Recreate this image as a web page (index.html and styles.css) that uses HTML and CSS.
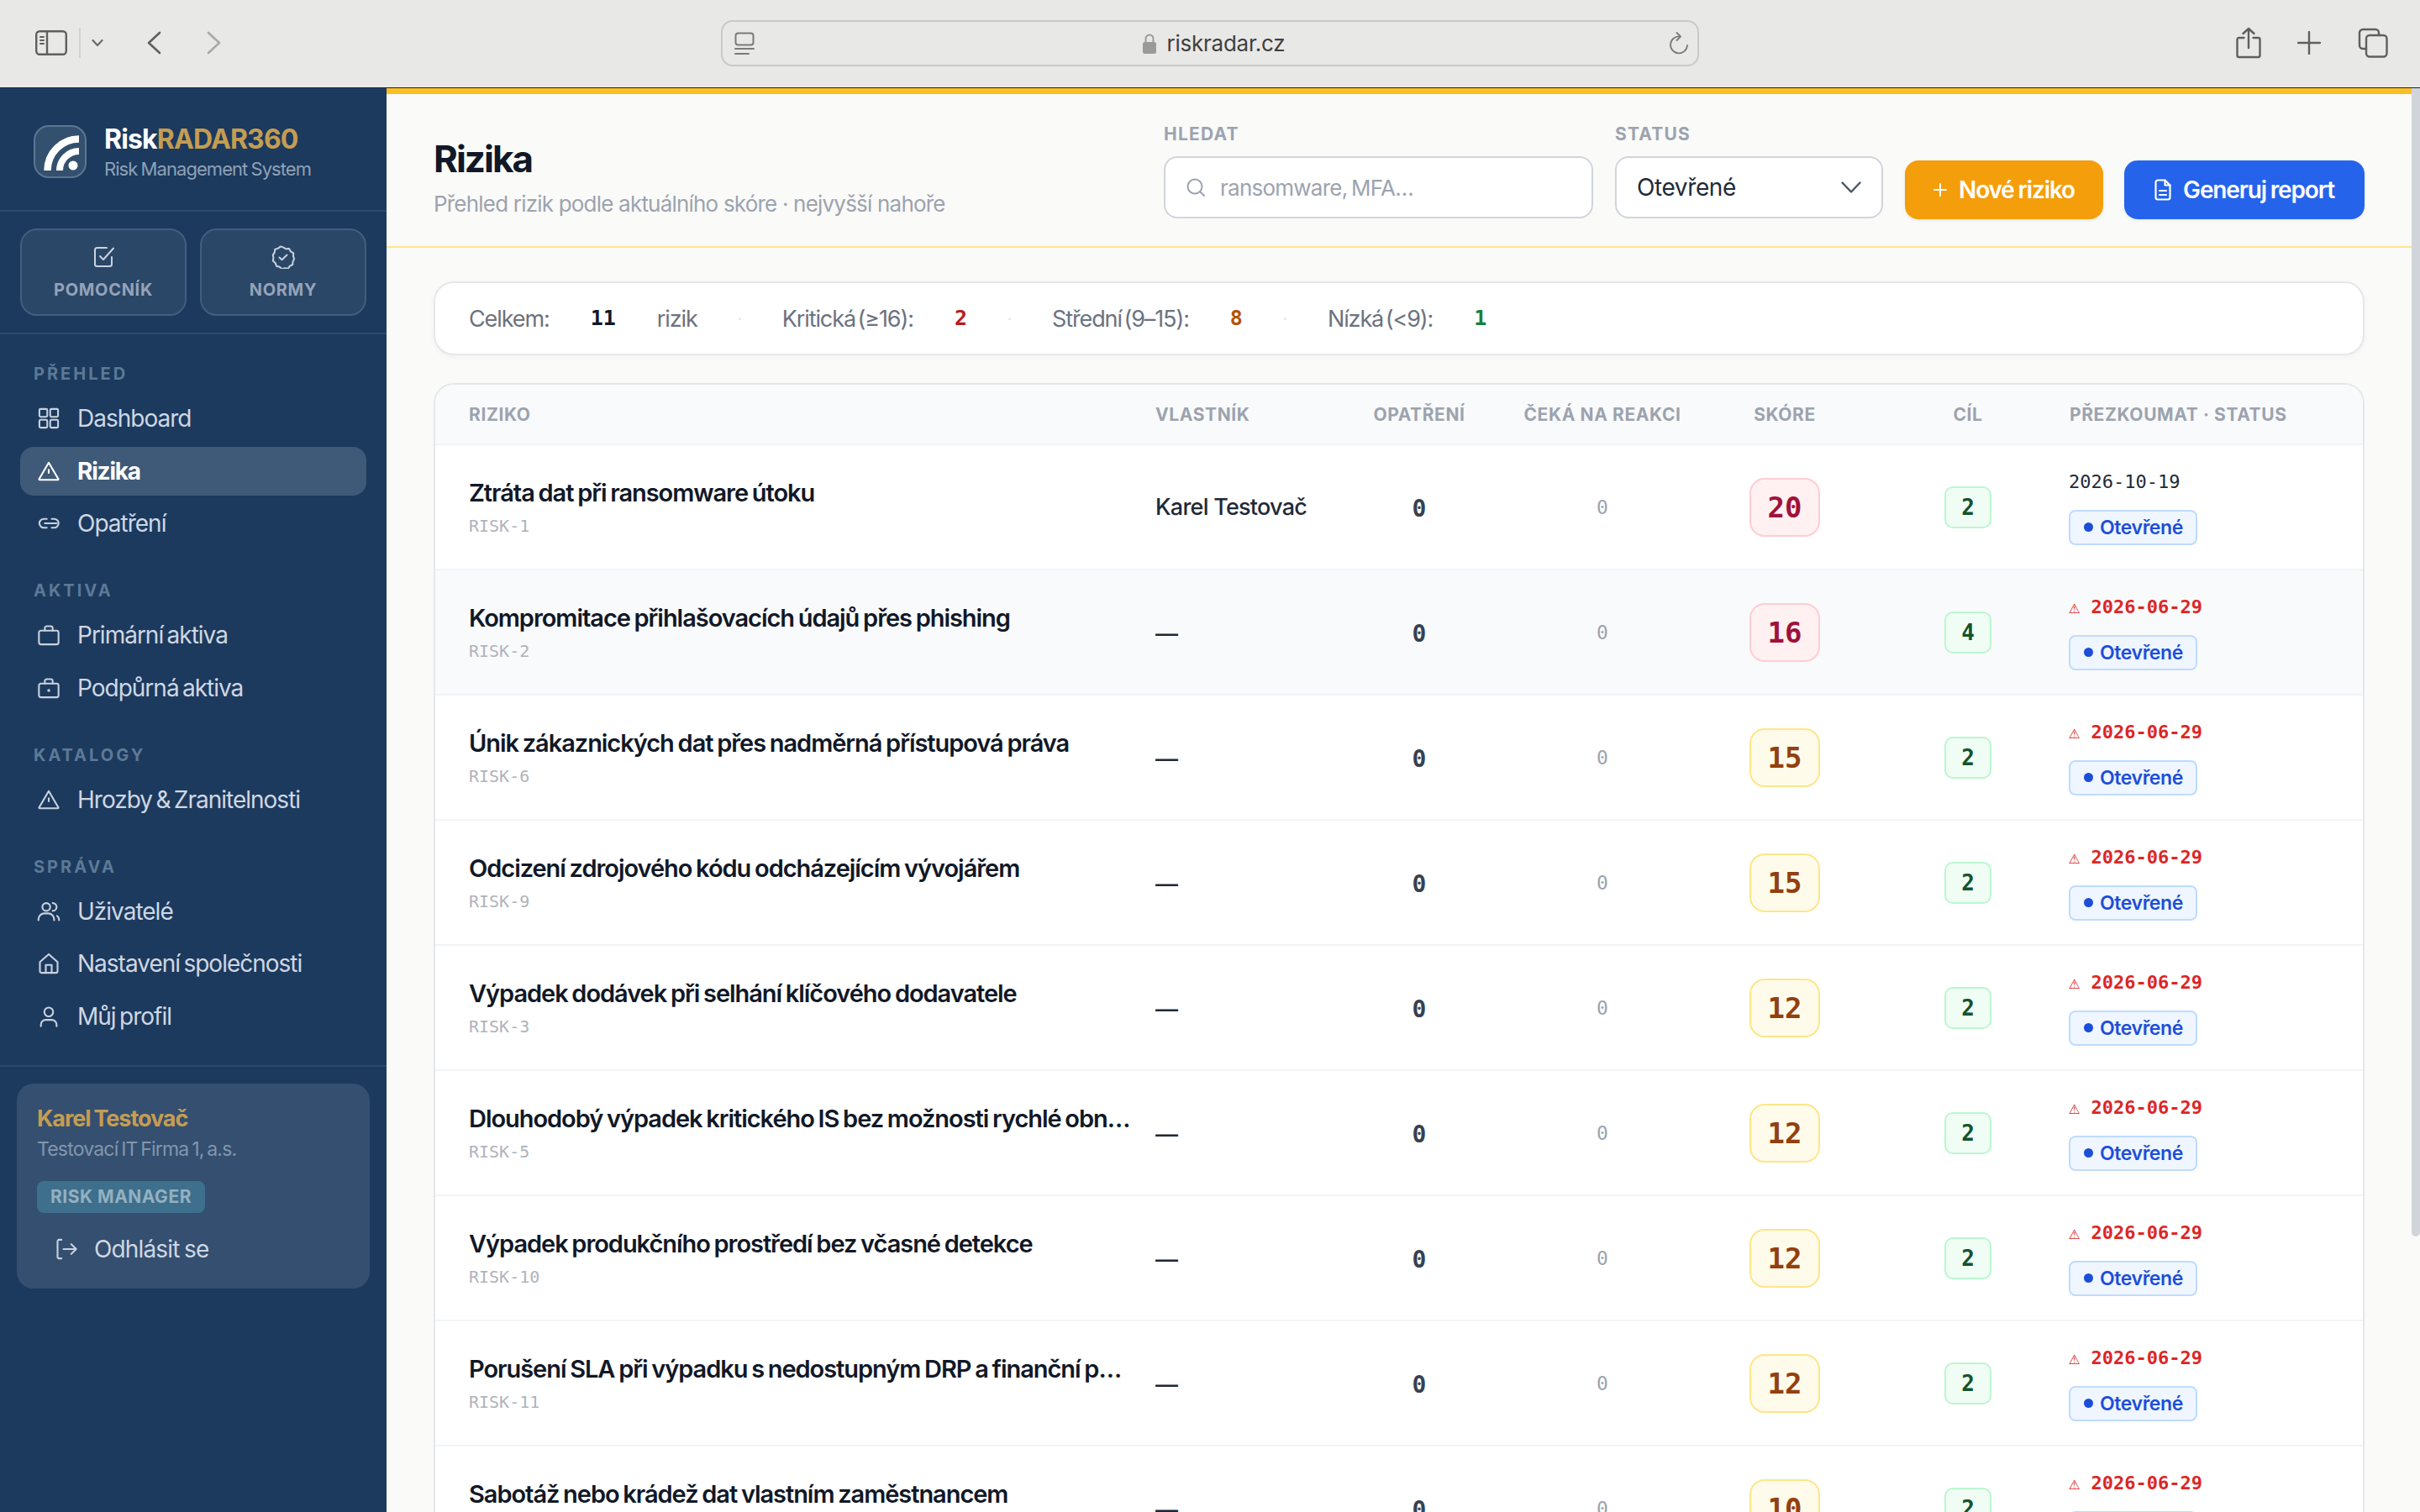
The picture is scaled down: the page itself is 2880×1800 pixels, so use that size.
FILE: index.html
```html
<!DOCTYPE html>
<html lang="cs">
<head>
<meta charset="utf-8">
<title>Rizika – RiskRADAR360</title>
<link rel="stylesheet" href="styles.css">
</head>
<body>
<svg class="defs" width="0" height="0" aria-hidden="true">
  <symbol id="i-warn" viewBox="0 0 24 24"><path d="M12 3.2 2.2 20a.6.6 0 0 0 .5.8h18.6a.6.6 0 0 0 .5-.8L12 3.2Z"/><path d="M12 10.5v3.2"/></symbol>
  <symbol id="i-grid" viewBox="0 0 24 24"><rect x="2.5" y="2.5" width="8" height="8" rx="1.2"/><rect x="13.5" y="2.5" width="8" height="8" rx="1.2"/><rect x="2.5" y="13.5" width="8" height="8" rx="1.2"/><rect x="13.5" y="13.5" width="8" height="8" rx="1.2"/></symbol>
  <symbol id="i-link" viewBox="0 0 24 24"><path d="M8 12h12"/><path d="M10 7.500H7a4.500 4.500 0 0 0 0 9h3"/><path d="M15 7.500h2.500a4.500 4.500 0 0 1 0 9H15"/></symbol>
  <symbol id="i-case" viewBox="0 0 24 24"><rect x="2" y="7.500" width="20" height="14" rx="2"/><path d="M8 7.500V5a2 2 0 0 1 2-2h4a2 2 0 0 1 2 2v2.500"/></symbol>
  <symbol id="i-aid" viewBox="0 0 24 24"><rect x="2" y="7.500" width="20" height="14" rx="2"/><path d="M8 7.500V5a2 2 0 0 1 2-2h4a2 2 0 0 1 2 2v2.500"/><path d="M12 14.500h.01" stroke-width="3"/></symbol>
  <symbol id="i-users" viewBox="0 0 24 24"><circle cx="9.500" cy="7.500" r="4"/><path d="M1.500 21v-1a6 6 0 0 1 6-6h4a6 6 0 0 1 6 6v1"/><path d="M16 3.500a4 4 0 0 1 0 8"/><path d="M20.500 16.500a5 5 0 0 1 2 4v.5"/></symbol>
  <symbol id="i-home" viewBox="0 0 24 24"><path d="M3 10.500 12 2.500l9 8V20a1.500 1.500 0 0 1-1.500 1.500h-15A1.500 1.500 0 0 1 3 20v-9.500Z"/><path d="M9 21.500v-8h6v8"/></symbol>
  <symbol id="i-user" viewBox="0 0 24 24"><circle cx="12" cy="7.500" r="4.500"/><path d="M4 22v-1.500a5 5 0 0 1 5-5h6a5 5 0 0 1 5 5V22"/></symbol>
</svg>

<header class="chrome">
  <div class="chrome-left">
    <svg class="ci ci-side" viewBox="0 0 38 30"><rect x="1.200" y="1.200" width="35.600" height="27.600" rx="4"/><path d="M14 1.500v27"/><path d="M6 8h4M6 12h4M6 16h4" stroke-width="2"/></svg>
    <span class="chrome-sep"></span>
    <svg class="ci ci-mini" viewBox="0 0 14 10"><path d="M1.500 2 7 8l5.500-6"/></svg>
    <svg class="ci ci-back" viewBox="0 0 18 28"><path d="M16 2 3 14l13 12"/></svg>
    <svg class="ci ci-fwd" viewBox="0 0 18 28"><path d="M2 2l13 12L2 26"/></svg>
  </div>
  <div class="urlbar">
    <svg class="ci ci-tab" viewBox="0 0 24 28"><rect x="1.500" y="1.500" width="21" height="14" rx="3"/><path d="M1 20h22M1 26h16"/></svg>
    <div class="url-mid">
      <svg class="ci-lock" viewBox="0 0 18 26"><path d="M4.500 12V7a4.500 4.500 0 0 1 9 0v5" fill="none" stroke="#9a9a9a" stroke-width="2"/><rect x="1" y="11" width="16" height="14" rx="2.500" fill="#9a9a9a"/></svg>
      <span class="url-text">riskradar.cz</span>
    </div>
    <svg class="ci ci-reload" viewBox="0 0 24 28"><path d="M13 5.500A10 10 0 1 0 22 16"/><path d="M9.500 1 14 5.500 9.500 10"/></svg>
  </div>
  <div class="chrome-right">
    <svg class="ci ci-share" viewBox="0 0 30 38"><path d="M9.500 13H3.500a2 2 0 0 0-2 2v19a2 2 0 0 0 2 2h23a2 2 0 0 0 2-2V15a2 2 0 0 0-2-2h-6"/><path d="M15 25V2M8.500 8 15 2l6.500 6"/></svg>
    <svg class="ci ci-plus" viewBox="0 0 28 28"><path d="M14 1v26M1 14h26"/></svg>
    <svg class="ci ci-tabs" viewBox="0 0 36 36"><rect x="10" y="9" width="24.500" height="25.500" rx="4"/><path d="M10 25H6a4 4 0 0 1-4-4V6a4 4 0 0 1 4-4h15a4 4 0 0 1 4 4v3"/></svg>
  </div>
</header>

<div class="app">
  <aside class="sidebar">
    <div class="brand">
      <div class="logo">
        <svg viewBox="0 0 63 63"><path class="logo-arc" d="M16.500 54A37.500 37.500 0 0 1 54 16.500" stroke-width="8.500"/><path class="logo-arc" d="M31 54A23 23 0 0 1 54 31" stroke-width="8"/><circle cx="47" cy="48" r="5.500" fill="#fff"/></svg>
      </div>
      <div class="brand-text">
        <div class="brand-name">Risk<span class="brand-gold">RADAR360</span></div>
        <div class="brand-sub">Risk Management System</div>
      </div>
    </div>
    <div class="quick">
      <a class="quick-btn">
        <svg class="qi" viewBox="0 0 28 28"><path d="M24 14v8.500a2.500 2.500 0 0 1-2.500 2.500h-15A2.500 2.500 0 0 1 4 22.500v-17A2.500 2.500 0 0 1 6.500 3H18"/><path d="M10 13l4 4L26 3.500"/></svg>
        <span>POMOCNÍK</span>
      </a>
      <a class="quick-btn">
        <svg class="qi" viewBox="0 0 28 28"><path d="M14 1.800l3.300 1.900 3.800-.2 1.900 3.300 3.200 2-.2 3.700 1.200 3-1.700 3.300-.2 3.600-3.300 1.700-2.200 3-3.800-.4-3.500.9-2.800-2.400-3.600-1-1.300-3.500L1.800 18l.6-3.800L1.800 11l2-3.200.6-3.700 3.600-1.100L11 .8z" transform="translate(0 .6)"/><path d="M9.500 14.500l3 2.800 6-5.800"/></svg>
        <span>NORMY</span>
      </a>
    </div>
    <nav class="nav">
      <div class="nav-label">PŘEHLED</div>
      <ul class="nav-list">
        <li class="nav-item"><svg class="ni"><use href="#i-grid"/></svg>Dashboard</li>
        <li class="nav-item active"><svg class="ni"><use href="#i-warn"/></svg>Rizika</li>
        <li class="nav-item"><svg class="ni"><use href="#i-link"/></svg>Opatření</li>
      </ul>
      <div class="nav-label">AKTIVA</div>
      <ul class="nav-list">
        <li class="nav-item"><svg class="ni"><use href="#i-case"/></svg>Primární aktiva</li>
        <li class="nav-item"><svg class="ni"><use href="#i-aid"/></svg>Podpůrná aktiva</li>
      </ul>
      <div class="nav-label">KATALOGY</div>
      <ul class="nav-list">
        <li class="nav-item"><svg class="ni"><use href="#i-warn"/></svg>Hrozby &amp; Zranitelnosti</li>
      </ul>
      <div class="nav-label">SPRÁVA</div>
      <ul class="nav-list">
        <li class="nav-item"><svg class="ni"><use href="#i-users"/></svg>Uživatelé</li>
        <li class="nav-item"><svg class="ni"><use href="#i-home"/></svg>Nastavení společnosti</li>
        <li class="nav-item"><svg class="ni"><use href="#i-user"/></svg>Můj profil</li>
      </ul>
    </nav>
    <div class="side-foot">
      <div class="user-card">
        <div class="user-name">Karel Testovač</div>
        <div class="user-org">Testovací IT Firma 1, a.s.</div>
        <div class="user-role">RISK MANAGER</div>
        <div class="logout">
          <svg class="ni" viewBox="0 0 24 24"><path d="M7 2.500H4.500A1.500 1.500 0 0 0 3 4v16a1.500 1.500 0 0 0 1.500 1.500H7"/><path d="M9 12h13M17 7l5 5-5 5"/></svg>
          <span>Odhlásit se</span>
        </div>
      </div>
    </div>
  </aside>

  <main class="main">
    <div class="page-head">
      <div class="page-title">
        <h1>Rizika</h1>
        <p>Přehled rizik podle aktuálního skóre · nejvyšší nahoře</p>
      </div>
      <div class="field field-search">
        <label>HLEDAT</label>
        <div class="input">
          <svg class="search-ic" viewBox="0 0 24 24"><circle cx="11" cy="11" r="8.500"/><path d="M17.500 17.500 22 22"/></svg>
          <span class="placeholder">ransomware, MFA…</span>
        </div>
      </div>
      <div class="field field-status">
        <label>STATUS</label>
        <div class="input select">
          <span>Otevřené</span>
          <svg class="select-ic" viewBox="0 0 24 14"><path d="M1.500 1.500 12 12.500 22.500 1.500"/></svg>
        </div>
      </div>
      <a class="btn btn-amber">
        <svg class="btn-ic-plus" viewBox="0 0 16 16"><path d="M8 1v14M1 8h14"/></svg>
        Nové riziko
      </a>
      <a class="btn btn-blue">
        <svg class="btn-ic-doc" viewBox="0 0 20 26"><path d="M12.500 1.500H4A2.500 2.500 0 0 0 1.500 4v18A2.500 2.500 0 0 0 4 24.500h12a2.500 2.500 0 0 0 2.500-2.500V7.500l-6-6Z"/><path d="M12.500 1.500v6h6M6 14h8M6 19h8"/></svg>
        Generuj report
      </a>
    </div>

    <div class="content">
      <div class="summary">
        <span>Celkem:</span><b class="n-dark">11</b><span>rizik</span><i class="dot"></i>
        <span>Kritická (≥16):</span><b class="n-red">2</b><i class="dot"></i>
        <span>Střední (9–15):</span><b class="n-orange">8</b><i class="dot"></i>
        <span>Nízká (&lt;9):</span><b class="n-green">1</b>
      </div>

      <div class="table-wrap">
        <table class="risks">
          <colgroup>
            <col class="c-risk"><col class="c-owner"><col class="c-act"><col class="c-wait"><col class="c-score"><col class="c-goal"><col class="c-review">
          </colgroup>
          <thead>
            <tr><th class="left first">RIZIKO</th><th class="left">VLASTNÍK</th><th>OPATŘENÍ</th><th>ČEKÁ NA REAKCI</th><th>SKÓRE</th><th>CÍL</th><th class="left">PŘEZKOUMAT · STATUS</th></tr>
          </thead>
          <tbody>
            <tr>
              <td class="first"><div class="r-title">Ztráta dat při ransomware útoku</div><div class="r-id">RISK-1</div></td>
              <td class="owner">Karel Testovač</td><td><span class="zero">0</span></td><td><span class="wait">0</span></td>
              <td><span class="score s-red">20</span></td><td><span class="goal">2</span></td>
              <td class="review"><div class="date">2026-10-19</div><span class="pill"><i></i>Otevřené</span></td>
            </tr>
            <tr class="hover">
              <td class="first"><div class="r-title">Kompromitace přihlašovacích údajů přes phishing</div><div class="r-id">RISK-2</div></td>
              <td class="owner none">—</td><td><span class="zero">0</span></td><td><span class="wait">0</span></td>
              <td><span class="score s-red">16</span></td><td><span class="goal">4</span></td>
              <td class="review"><div class="date late">⚠ 2026-06-29</div><span class="pill"><i></i>Otevřené</span></td>
            </tr>
            <tr>
              <td class="first"><div class="r-title">Únik zákaznických dat přes nadměrná přístupová práva</div><div class="r-id">RISK-6</div></td>
              <td class="owner none">—</td><td><span class="zero">0</span></td><td><span class="wait">0</span></td>
              <td><span class="score s-amber">15</span></td><td><span class="goal">2</span></td>
              <td class="review"><div class="date late">⚠ 2026-06-29</div><span class="pill"><i></i>Otevřené</span></td>
            </tr>
            <tr>
              <td class="first"><div class="r-title">Odcizení zdrojového kódu odcházejícím vývojářem</div><div class="r-id">RISK-9</div></td>
              <td class="owner none">—</td><td><span class="zero">0</span></td><td><span class="wait">0</span></td>
              <td><span class="score s-amber">15</span></td><td><span class="goal">2</span></td>
              <td class="review"><div class="date late">⚠ 2026-06-29</div><span class="pill"><i></i>Otevřené</span></td>
            </tr>
            <tr>
              <td class="first"><div class="r-title">Výpadek dodávek při selhání klíčového dodavatele</div><div class="r-id">RISK-3</div></td>
              <td class="owner none">—</td><td><span class="zero">0</span></td><td><span class="wait">0</span></td>
              <td><span class="score s-amber">12</span></td><td><span class="goal">2</span></td>
              <td class="review"><div class="date late">⚠ 2026-06-29</div><span class="pill"><i></i>Otevřené</span></td>
            </tr>
            <tr>
              <td class="first"><div class="r-title">Dlouhodobý výpadek kritického IS bez možnosti rychlé obnovy</div><div class="r-id">RISK-5</div></td>
              <td class="owner none">—</td><td><span class="zero">0</span></td><td><span class="wait">0</span></td>
              <td><span class="score s-amber">12</span></td><td><span class="goal">2</span></td>
              <td class="review"><div class="date late">⚠ 2026-06-29</div><span class="pill"><i></i>Otevřené</span></td>
            </tr>
            <tr>
              <td class="first"><div class="r-title">Výpadek produkčního prostředí bez včasné detekce</div><div class="r-id">RISK-10</div></td>
              <td class="owner none">—</td><td><span class="zero">0</span></td><td><span class="wait">0</span></td>
              <td><span class="score s-amber">12</span></td><td><span class="goal">2</span></td>
              <td class="review"><div class="date late">⚠ 2026-06-29</div><span class="pill"><i></i>Otevřené</span></td>
            </tr>
            <tr>
              <td class="first"><div class="r-title">Porušení SLA při výpadku s nedostupným DRP a finanční penalizací</div><div class="r-id">RISK-11</div></td>
              <td class="owner none">—</td><td><span class="zero">0</span></td><td><span class="wait">0</span></td>
              <td><span class="score s-amber">12</span></td><td><span class="goal">2</span></td>
              <td class="review"><div class="date late">⚠ 2026-06-29</div><span class="pill"><i></i>Otevřené</span></td>
            </tr>
            <tr>
              <td class="first"><div class="r-title">Sabotáž nebo krádež dat vlastním zaměstnancem</div><div class="r-id">RISK-7</div></td>
              <td class="owner none">—</td><td><span class="zero">0</span></td><td><span class="wait">0</span></td>
              <td><span class="score s-amber">10</span></td><td><span class="goal">2</span></td>
              <td class="review"><div class="date late">⚠ 2026-06-29</div><span class="pill"><i></i>Otevřené</span></td>
            </tr>
          </tbody>
        </table>
      </div>
    </div>
    <div class="scroll-thumb"></div>
  </main>
</div>
</body>
</html>
```
FILE: styles.css
```css
* { box-sizing: border-box; }
html, body { margin: 0; height: 1800px; overflow: hidden; }
body { font-family: Inter, "Noto Sans", sans-serif; color: #111827; background: #fafaf8; display: flex; flex-direction: column; }
.defs { position: absolute; }
ul { list-style: none; margin: 0; padding: 0; }

/* browser chrome */
.chrome { height: 105px; flex: none; background: #e8e8e6; border-bottom: 1px solid #0f2540; display: grid; grid-template-columns: 858px 1164px 1fr; }
.ci { fill: none; stroke: #5f5f5f; stroke-width: 2.4; stroke-linecap: round; stroke-linejoin: round; display: block; }
.chrome-left { display: flex; align-items: center; padding: 0 0 2px 42px; }
.ci-side { width: 38px; height: 30px; }
.chrome-sep { width: 2px; height: 36px; background: #d2d2d0; margin: 0 13px 0 14px; }
.ci-mini { width: 14px; height: 10px; stroke-width: 2.200; stroke: #6b6b6b; }
.ci-back { width: 18px; height: 28px; margin-left: 51px; stroke-width: 2.600; }
.ci-fwd { width: 18px; height: 28px; margin-left: 54px; stroke: #a9a9a9; stroke-width: 2.600; }
.urlbar { height: 55px; margin-top: 24px; border: 2px solid #c9c9c7; border-radius: 14px; display: flex; align-items: center; justify-content: space-between; padding: 0 10px 0 14px; }
.ci-tab { width: 24px; height: 28px; stroke: #7a7a7a; stroke-width: 2; }
.url-mid { display: flex; align-items: center; gap: 12px; margin-left: 4px; }
.ci-lock { width: 18px; height: 26px; }
.url-text { font-size: 26px; color: #3f3f3f; letter-spacing: -.25px; }
.ci-reload { width: 24px; height: 28px; stroke: #7a7a7a; stroke-width: 1.800; }
.chrome-right { display: flex; align-items: center; justify-content: flex-end; padding: 0 38px 2px 0; }
.ci-share { width: 30px; height: 38px; margin-right: 43px; }
.ci-plus { width: 28px; height: 28px; margin-right: 44px; }
.ci-tabs { width: 36px; height: 36px; }

.app { flex: 1; display: flex; min-height: 0; }

/* sidebar */
.sidebar { width: 460px; flex: none; background: #1c3a5e; color: #cfd7e3; display: flex; flex-direction: column; }
.brand { height: 147px; padding: 44px 0 0 40px; display: flex; gap: 21px; border-bottom: 2px solid #2c4a6d; }
.logo { width: 63px; height: 63px; border-radius: 18px; background: #33506f; border: 2px solid #5d7690; overflow: hidden; position: relative; flex: none; }
.logo svg { position: absolute; left: -2px; top: -2px; width: 63px; height: 63px; }
.logo-arc { fill: none; stroke: #fff; }
.brand-name { font-size: 32px; line-height: 36px; font-weight: 700; color: #fff; letter-spacing: -.85px; margin-top: -1px; }
.brand-gold { color: #c49d52; }
.brand-sub { font-size: 22px; line-height: 30px; color: #8fa1b7; letter-spacing: -.95px; word-spacing: -1px; margin-top: 2px; }
.quick { height: 146px; padding: 20px 24px; display: flex; gap: 16px; border-bottom: 2px solid #2c4a6d; }
.quick-btn { width: 198px; height: 104px; border-radius: 20px; background: #2b4768; border: 2px solid #435d7d; display: flex; flex-direction: column; align-items: center; padding-top: 18px; }
.qi { width: 28px; height: 28px; fill: none; stroke: #c9d2de; stroke-width: 2; stroke-linecap: round; stroke-linejoin: round; }
.quick-btn span { font-size: 20px; line-height: 28px; font-weight: 700; color: #94a3b8; letter-spacing: .7px; margin-top: 11px; }
.nav { padding: 35px 24px 0; }
.nav-label { font-size: 20px; line-height: 24px; font-weight: 700; letter-spacing: 3px; color: #5d7996; padding-left: 16px; margin-bottom: 12px; }
.nav-list { display: flex; flex-direction: column; gap: 4.5px; margin-bottom: 39px; }
.nav-item { height: 58px; border-radius: 16px; display: flex; align-items: center; gap: 20px; padding-left: 20px; font-size: 28px; letter-spacing: -1px; word-spacing: -2.500px; color: #cfd7e3; }
.ni { width: 28px; height: 28px; flex: none; fill: none; stroke: #c9d2de; stroke-width: 1.800; stroke-linecap: round; stroke-linejoin: round; }
.nav-item.active { background: #3f5a78; color: #fff; font-weight: 700; letter-spacing: -1.200px; }
.nav-item.active .ni { stroke: #fff; }
.side-foot { border-top: 2px solid #2c4a6d; margin-top: -10px; padding: 20px 20px 0; }
.user-card { height: 244px; border-radius: 20px; background: #344f70; padding: 24px; }
.user-name { font-size: 27px; line-height: 36px; font-weight: 700; color: #c49d52; letter-spacing: -1.050px; word-spacing: -1.500px; }
.user-org { font-size: 23px; line-height: 30px; margin-top: 3px; color: #8396ad; letter-spacing: -.8px; word-spacing: -2px; }
.user-role { width: 200px; height: 38px; margin-top: 23px; border-radius: 8px; background: #3e6f8c; color: #94b0c0; font-size: 21px; line-height: 38px; font-weight: 700; letter-spacing: .5px; text-align: center; }
.logout { display: flex; align-items: center; gap: 19px; margin: 25px 0 0 21px; font-size: 28px; line-height: 36px; color: #cfd7e3; letter-spacing: -.85px; word-spacing: -1.500px; }

/* main */
.main { flex: 1; min-width: 0; position: relative; padding-right: 10px; background: #fafaf8; }
.main::before { content: ""; position: absolute; left: 0; right: 0; top: 0; height: 7px; background: #fbbf24; }
.scroll-thumb { position: absolute; right: 0; top: 0; width: 10px; height: 1367px; background: #d1d5db; border-radius: 0 0 5px 5px; }
.page-head { height: 190px; padding: 7px 66px 32px 56px; margin-right: -10px; border-bottom: 2px solid #fde68a; display: flex; align-items: flex-end; }
.page-title { flex: 1; }
.page-title h1 { margin: 0; font-size: 44px; line-height: 56px; font-weight: 700; letter-spacing: -2px; color: #111827; }
.page-title p { margin: 8px 0 0; font-size: 26px; line-height: 36px; color: #9ca3af; letter-spacing: -.8px; }
.field { display: flex; flex-direction: column; margin-bottom: 1px; }
.field label { font-size: 21px; line-height: 26px; font-weight: 700; letter-spacing: 1.200px; color: #9ca3af; margin-bottom: 13px; }
.field-search { width: 511px; margin-right: 26px; }
.field-status { width: 319px; margin-right: 26px; }
.input { height: 74px; background: #fff; border: 2px solid #d1d5db; border-radius: 16px; display: flex; align-items: center; font-size: 28px; padding: 0 24px; }
.search-ic { width: 24px; height: 24px; fill: none; stroke: #9ca3af; stroke-width: 2; stroke-linecap: round; margin-right: 17px; flex: none; }
.placeholder { font-size: 26px; color: #9ca3af; letter-spacing: -.75px; word-spacing: -2px; }
.select { justify-content: space-between; font-size: 28px; color: #1f2937; letter-spacing: -.4px; }
.select-ic { width: 24px; height: 14px; fill: none; stroke: #4b5563; stroke-width: 2.400; stroke-linecap: round; stroke-linejoin: round; }
.btn { height: 70px; border-radius: 16px; display: flex; align-items: center; justify-content: center; color: #fff; font-size: 28px; font-weight: 600; letter-spacing: -1.150px; word-spacing: -1px; box-shadow: 0 2px 4px rgba(0,0,0,.06); }
.btn-amber { width: 236px; background: #f59e0b; gap: 14px; }
.btn-blue { width: 286px; background: #2563eb; gap: 14px; margin-left: 25px; }
.btn-ic-plus { width: 16px; height: 16px; fill: none; stroke: #fff; stroke-width: 2; stroke-linecap: round; }
.btn-ic-doc { width: 20px; height: 26px; fill: none; stroke: #fff; stroke-width: 2.200; stroke-linejoin: round; stroke-linecap: round; }

.content { padding: 40px 56px 0; }
.summary { height: 88px; background: #fff; border: 2px solid #e5e7eb; border-radius: 24px; box-shadow: 0 2px 6px rgba(0,0,0,.04); display: flex; align-items: center; padding: 0 40px; font-size: 27px; color: #6b7280; letter-spacing: -1.100px; word-spacing: -4px; gap: 49px; margin-bottom: 33px; }
.summary b { font-family: "DejaVu Sans Mono", "Liberation Mono", monospace; font-size: 25px; font-weight: 700; letter-spacing: 0; word-spacing: 0; position: relative; top: -1px; }
.dot { width: 3px; height: 3px; border-radius: 50%; background: #e5e7eb; }
.n-dark { color: #111827; }
.n-red { color: #b91c1c; }
.n-orange { color: #b45309; }
.n-green { color: #15803d; }

.table-wrap { background: #fff; border: 2px solid #e5e7eb; border-radius: 24px; overflow: hidden; }
.risks { width: 100%; table-layout: fixed; border-collapse: separate; border-spacing: 0; }
.c-risk { width: 835px; } .c-owner { width: 216px; } .c-act { width: 240px; } .c-wait { width: 196px; } .c-score { width: 238px; } .c-goal { width: 198px; } .c-review { width: 371px; }
.risks th { height: 72px; padding: 0; background: #f9fafb; border-bottom: 2px solid #f3f4f6; font-size: 21px; font-weight: 700; color: #9ca3af; letter-spacing: .6px; text-align: center; white-space: nowrap; }
.risks th.left { text-align: left; padding-left: 22px; }
.risks th.first { padding-left: 40px; }
.risks td { height: 149px; padding: 0; text-align: center; vertical-align: middle; border-bottom: 2px solid #f3f4f6; }
.risks td.first { text-align: left; padding: 0 4px 0 40px; }
.hover td { background: #f9fafb; }
.r-title { font-size: 29px; line-height: 36px; font-weight: 600; color: #111827; letter-spacing: -1.050px; word-spacing: -1.500px; white-space: nowrap; overflow: hidden; text-overflow: ellipsis; }
.r-id { font-family: "DejaVu Sans Mono", "Liberation Mono", monospace; font-size: 20px; line-height: 26px; color: #aeb3bb; margin-top: 8px; }
.owner { text-align: left !important; padding-left: 22px !important; font-size: 27px; font-weight: 500; color: #1f2937; letter-spacing: -.75px; }
.none { padding-top: 4px !important; }
.zero { font-family: "DejaVu Sans Mono", "Liberation Mono", monospace; font-size: 28px; font-weight: 700; color: #374151; position: relative; top: 2px; }
.wait { font-family: "DejaVu Sans Mono", "Liberation Mono", monospace; font-size: 23px; color: #9ca3af; }
.score { display: inline-flex; align-items: center; justify-content: center; width: 84px; height: 70px; border-radius: 18px; border: 2px solid; font-family: "DejaVu Sans Mono", "Liberation Mono", monospace; font-size: 34px; font-weight: 700; vertical-align: middle; }
.s-red { background: #fff1f2; border-color: #fecdd3; color: #9f1239; }
.s-amber { background: #fffbeb; border-color: #fde68a; color: #92400e; }
.goal { display: inline-flex; align-items: center; justify-content: center; width: 56px; height: 50px; border-radius: 10px; background: #f0fdf4; border: 2px solid #bbf7d0; color: #14532d; font-family: "DejaVu Sans Mono", "Liberation Mono", monospace; font-size: 26px; font-weight: 700; vertical-align: middle; }
.review { text-align: left !important; padding-left: 21px !important; }
.date { font-family: "DejaVu Sans Mono", "Liberation Mono", monospace; font-size: 22px; line-height: 30px; color: #1f2937; margin-bottom: 18px; }
.date.late { color: #dc2626; font-weight: 700; }
.pill { display: inline-flex; align-items: center; gap: 8px; height: 42px; padding: 0 15px 0 16px; border-radius: 8px; background: #eff6ff; border: 2px solid #bfdbfe; color: #1d4ed8; font-size: 23px; font-weight: 600; letter-spacing: -.4px; vertical-align: top; }
.pill i { width: 11px; height: 11px; border-radius: 50%; background: #1d4ed8; }
```
